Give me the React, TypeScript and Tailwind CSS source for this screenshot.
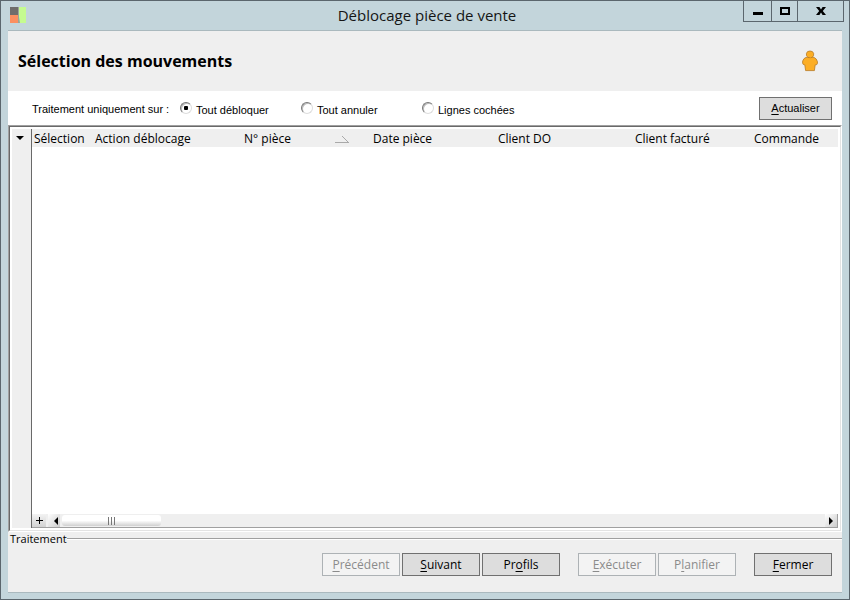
import { useState } from "react";
import type { ReactNode } from "react";

const segoe = "font-['Open_Sans','Noto_Sans',sans-serif]";
const system = "font-['Liberation_Sans',Arial,sans-serif]";

function AppLogo() {
  return (
    <svg width="16" height="16" viewBox="0 0 16 16" aria-hidden="true">
      <rect width="8" height="8" fill="#6f6d6b" />
      <rect y="8" width="8" height="8" fill="#fb8f60" />
      <rect x="9" width="7" height="16" fill="#c5fb90" />
      <path d="M8 0H9V10L10 16H8Z" fill="#9aa39a" />
    </svg>
  );
}

function PersonIcon() {
  return (
    <svg width="16" height="22" viewBox="0 0 16 22" role="img" aria-label="Utilisateur">
      <g fill="#fcae25" stroke="#b77a22" strokeWidth="0.8" strokeLinejoin="round">
        <path d="M4 7.4H12Q14.6 8.4 15.4 11.5Q15.8 13.6 14.8 14.6L13.2 14.8L12.4 20.6H3.6L2.8 14.8L1.2 14.4Q0.2 13.2 0.7 11Q1.6 8.2 4 7.4Z" />
        <path d="M5.6 1.6Q8 0.4 10.4 1.6Q12.2 3.2 11.6 5.4Q10.8 7.6 8.6 8Q5.4 8 4.5 5.6Q3.9 3 5.6 1.6Z" />
      </g>
      <path d="M5 7.8Q8 9 11 7.8V9H5Z" fill="#fcae25" />
    </svg>
  );
}

function CaptionButton({ label, width, children }: { label: string; width: string; children: ReactNode }) {
  return (
    <button
      aria-label={label}
      className={`${width} flex h-[21px] items-center justify-center border-r border-b border-[#5b666d]`}
    >
      <svg width="12" height="12" viewBox="0 0 12 12" aria-hidden="true">
        {children}
      </svg>
    </button>
  );
}

function Choice({ label, checked, onSelect }: { label: string; checked: boolean; onSelect: () => void }) {
  return (
    <label className="flex w-[121px] items-center">
      <input
        type="radio"
        name="mode"
        checked={checked}
        onChange={onSelect}
        className="mb-1 size-3 shrink-0 appearance-none rounded-full border border-t-[#777] border-r-[#ddd] border-b-[#ddd] border-l-[#777] bg-white shadow-[inset_1px_1px_0_#bbb] checked:bg-[radial-gradient(circle,#000_2px,transparent_2.5px)]"
      />
      <span className="ml-1 whitespace-nowrap">{label}</span>
    </label>
  );
}

function ActionButton({ before = "", hot, after, disabled }: { before?: string; hot: string; after: string; disabled?: boolean }) {
  return (
    <button
      disabled={disabled}
      className="h-[23px] w-[78px] border border-[#707070] bg-[#dddddd] text-[12px] leading-[20px] text-black disabled:border-[#adb2b5] disabled:bg-[#f3f3f3] disabled:text-[#8b8b8b]"
    >
      {before}
      <span className="underline underline-offset-2">{hot}</span>
      {after}
    </button>
  );
}

const columns = [
  { label: "Sélection", width: "w-[61px]" },
  { label: "Action déblocage", width: "w-[149px]" },
  { label: "N° pièce", width: "w-[129px]", sorted: true },
  { label: "Date pièce", width: "w-[125px]" },
  { label: "Client DO", width: "w-[137px]" },
  { label: "Client facturé", width: "w-[119px]" },
  { label: "Commande", width: "w-auto" },
];

const modes = ["Tout débloquer", "Tout annuler", "Lignes cochées"];

export default function App() {
  const [mode, setMode] = useState(modes[0]);

  return (
    <div className={`${segoe} flex h-screen flex-col border border-[#5b666d] bg-[#c3d5db] px-[7px] pb-[6px] text-black`}>
      <header className="flex h-[29px] shrink-0 items-start">
        <div className="flex flex-1 pt-[6px] pl-[2px]">
          <AppLogo />
        </div>
        <h1 className="pt-1 text-[15px] leading-5 text-[#151515]">Déblocage pièce de vente</h1>
        <div className="-mr-[2px] flex flex-1 justify-end">
          <div className="flex border-l border-[#5b666d]">
            <CaptionButton label="Réduire" width="w-7">
              <path d="M1 7H11V10H1Z" />
            </CaptionButton>
            <CaptionButton label="Agrandir" width="w-[26px]">
              <path d="M2 3H10V9H2Z" fill="none" stroke="#000" strokeWidth="2" />
            </CaptionButton>
            <CaptionButton label="Fermer la fenêtre" width="w-[46px]">
              <path d="M1 2H4.4L6 4.4L7.6 2H11L7.8 6L11 10H7.6L6 7.6L4.4 10H1L4.2 6Z" />
            </CaptionButton>
          </div>
        </div>
      </header>

      <main className="flex min-h-0 flex-1 flex-col border-t border-b border-[#aab9be] bg-[#efefef]">
        <div className="flex h-[60px] shrink-0 items-center justify-between pr-6 pl-[10px]">
          <h2 className="text-[16px] leading-[22px] font-bold">Sélection des mouvements</h2>
          <PersonIcon />
        </div>

        <div
          role="group"
          aria-labelledby="mode-label"
          className={`${system} flex h-[34px] shrink-0 items-center bg-white pr-[10px] pl-6 text-[11px] leading-4`}
        >
          <span id="mode-label" className="w-[148px] pt-[2px] whitespace-nowrap">
            Traitement uniquement sur :
          </span>
          <div className="flex flex-1 pt-1">
            {modes.map((m) => (
              <Choice key={m} label={m} checked={mode === m} onSelect={() => setMode(m)} />
            ))}
          </div>
          <button className="h-[23px] w-[73px] border border-[#707070] bg-[#dddddd]">
            <span className="underline underline-offset-2">A</span>ctualiser
          </button>
        </div>

        <section className="flex min-h-0 flex-1 border border-t-[#a0a0a0] border-r-white border-b-white border-l-[#a0a0a0]">
          <div className="flex min-w-0 flex-1 border border-t-[#696969] border-r-[#e3e3e3] border-b-[#e3e3e3] border-l-[#696969] bg-white p-[2px]">
            <div className="flex w-5 shrink-0 border-r border-[#696969] bg-[#efefef] pt-[7px] pl-1">
              <button aria-label="Menu de la liste" className="h-1 w-2">
                <svg width="8" height="4" viewBox="0 0 8 4" aria-hidden="true" className="block">
                  <path d="M0 0H8L4 4Z" />
                </svg>
              </button>
            </div>
            <div className="flex min-w-0 flex-1 flex-col">
              <div className="flex-1">
                <table className="w-full table-fixed border-collapse bg-[#efefef] text-left text-[12px] leading-4">
                  <thead>
                    <tr>
                      {columns.map((c) => (
                        <th key={c.label} className={`${c.width} p-0 pt-[2px] pl-[2px] font-normal whitespace-nowrap`}>
                          {c.sorted ? (
                            <div className="flex items-center justify-between pr-[22px]">
                              {c.label}
                              <svg width="14" height="8" viewBox="0 0 14 8" aria-hidden="true">
                                <path d="M0 7.5H14" stroke="#a9a9a9" />
                                <path d="M7 1L13 7" fill="none" stroke="#a9a9a9" />
                              </svg>
                            </div>
                          ) : (
                            c.label
                          )}
                        </th>
                      ))}
                    </tr>
                  </thead>
                  <tbody />
                </table>
              </div>
              <div className="flex h-[14px] border-r border-b border-[#a0a0a0] bg-[#efefef]">
                <button aria-label="Ajouter une colonne" className="flex w-[14px] items-center justify-center bg-linear-to-b from-[#f3f3f3] to-[#d2d2d2]">
                  <svg width="7" height="7" viewBox="0 0 7 7" aria-hidden="true">
                    <path d="M3 0H4V3H7V4H4V7H3V4H0V3H3Z" />
                  </svg>
                </button>
                <button aria-label="Défiler à gauche" className="ml-[2px] flex w-3 items-center justify-end bg-linear-to-br from-[#fff] to-[#ccc] pr-[2px]">
                  <svg width="4" height="8" viewBox="0 0 4 8" aria-hidden="true">
                    <path d="M4 0V8L0 4Z" />
                  </svg>
                </button>
                <div className="flex-1 pt-[1px] pl-[2px]">
                  <div className="flex h-[11px] w-[99px] items-center justify-center gap-[2px] rounded-[3px] bg-linear-to-b from-white from-50% to-[#d0d0d0]">
                    <i className="h-2 w-px bg-[#777]" />
                    <i className="h-2 w-px bg-[#777]" />
                    <i className="h-2 w-px bg-[#777]" />
                  </div>
                </div>
                <button aria-label="Défiler à droite" className="flex w-3 items-center bg-linear-to-br from-[#fff] to-[#ccc] pl-1">
                  <svg width="4" height="8" viewBox="0 0 4 8" aria-hidden="true">
                    <path d="M0 0V8L4 4Z" />
                  </svg>
                </button>
              </div>
            </div>
          </div>
        </section>

        <footer className="flex h-[60px] shrink-0 flex-col">
          <div className="flex items-center pl-[2px]">
            <h3 className="text-[11px] leading-[14px]">Traitement</h3>
            <div className="h-[2px] flex-1 border-t border-b border-t-[#a0a0a0] border-b-white" />
          </div>
          <div className="flex justify-end gap-[18px] pt-[7px] pr-[10px]">
            <div className="flex gap-[2px]">
              <ActionButton hot="P" after="récédent" disabled />
              <ActionButton hot="S" after="uivant" />
              <ActionButton before="Pr" hot="o" after="fils" />
            </div>
            <div className="flex gap-[2px]">
              <ActionButton hot="E" after="xécuter" disabled />
              <ActionButton before="P" hot="l" after="anifier" disabled />
            </div>
            <ActionButton hot="F" after="ermer" />
          </div>
        </footer>
      </main>
    </div>
  );
}
